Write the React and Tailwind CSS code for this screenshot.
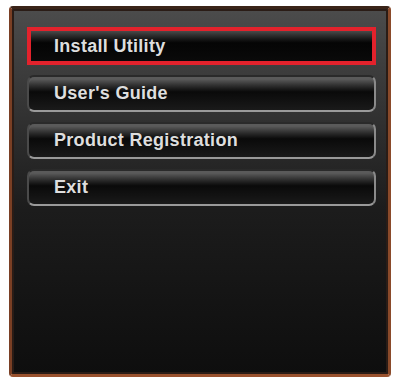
import React from 'react';

const items = ['Install Utility', "User's Guide", 'Product Registration', 'Exit'];

const MenuButton = ({ label, active }) => {
  if (active) {
    return (
      <div className="h-[38px] border-[4px] border-[#e3222c] bg-gradient-to-b from-[#4a4a4a] via-[#050505] via-40% to-[#0a0a0a] flex items-center pl-[23px]">
        <span className="text-[18px] font-bold tracking-[0.3px] text-[#dedede]">{label}</span>
      </div>
    );
  }
  return (
    <div className="h-[37px] rounded-[7px] border-2 border-t-[#2a2a2a] border-l-[#4a4a4a] border-r-[#8a8a8a] border-b-[#9a9a9a] bg-gradient-to-b from-[#6a6a6a] via-[#0a0a0a] via-45% to-[#1a1a1a] shadow-[inset_0_2px_0_#5a5a5a] flex items-center pl-[25px]">
      <span className="text-[18px] font-bold tracking-[0.3px] text-[#dedede]">{label}</span>
    </div>
  );
};

export default function App() {
  return (
    <div className="w-[396px] h-[379px] bg-white pt-[6px] pl-[9px]" style={{ fontFamily: '"Liberation Sans", Arial, sans-serif' }}>
      <div className="w-[382px] h-[371px] rounded-[4px] border-[3px] border-t-[#3a2418] border-l-[#7a3f24] border-r-[#8a4a2a] border-b-[#9a522e] shadow-[inset_0_0_0_2px_#2a1c16] bg-gradient-to-b from-[#4c4c4c] via-[#1c1c1c] via-55% to-[#0e0e0e] pt-[18px] pl-[15px] pr-[12px]">
        <div className="flex flex-col gap-[10px]">
          {items.map((label, i) => (
            <MenuButton key={label} label={label} active={i === 0} />
          ))}
        </div>
      </div>
    </div>
  );
}
